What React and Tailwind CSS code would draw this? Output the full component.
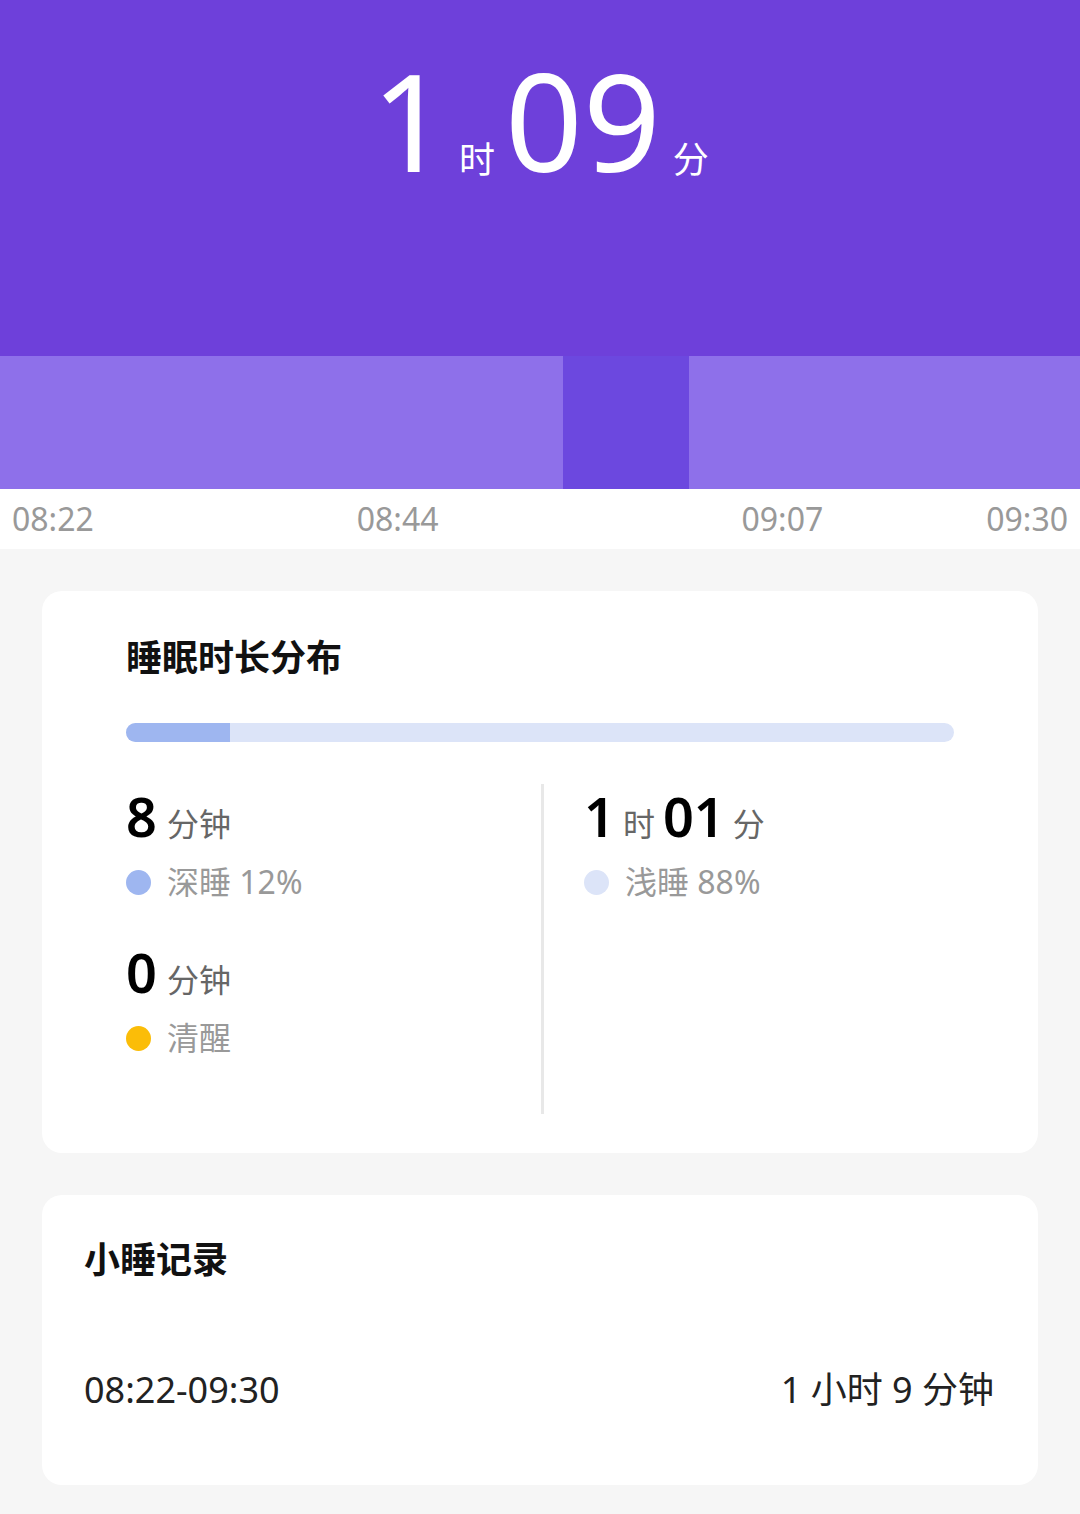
export default function App() {
  const font = { fontFamily: '"Noto Sans", "Noto Sans CJK SC", sans-serif' };
  return (
    <div className="w-[1080px] h-[1514px] bg-[#f6f6f6] overflow-hidden" style={font}>
      <div className="h-[356px] bg-[#6e40da] flex justify-center items-start pt-[60px]">
        <div className="flex items-end text-white leading-none">
          <span className="text-[136px] font-normal leading-[120px]">1</span>
          <span className="text-[36px] mx-[10px] mb-[2px]">时</span>
          <span className="text-[136px] font-normal leading-[120px]">09</span>
          <span className="text-[36px] ml-[12px] mb-[2px]">分</span>
        </div>
      </div>
      <div className="h-[133px] flex">
        <div className="w-[563px] bg-[#8e70ea]" />
        <div className="w-[126px] bg-[#6c48df]" />
        <div className="flex-1 bg-[#8e70ea]" />
      </div>
      <div className="h-[60px] bg-white flex justify-between items-center px-[12px] text-[32px] text-[#999]">
        <span>08:22</span>
        <span className="ml-[100px]">08:44</span>
        <span className="ml-[140px]">09:07</span>
        <span>09:30</span>
      </div>
      <div className="px-[42px] pt-[42px] flex flex-col gap-[42px]">
        <div className="bg-white rounded-[20px] h-[562px] px-[84px] pt-[40px]">
          <div className="text-[36px] font-bold text-[#111]">睡眠时长分布</div>
          <div className="mt-[38px] h-[19px] rounded-full bg-[#dce4f8] overflow-hidden">
            <div className="w-[104px] h-full bg-[#9eb6f0]" />
          </div>
          <div className="flex mt-[42px]">
            <div className="w-[415px] pt-[4px]">
              <div className="flex items-end gap-[10px]">
                <span className="text-[54px] font-semibold leading-[56px] text-black">8</span>
                <span className="text-[32px] text-[#666] leading-[40px]">分钟</span>
              </div>
              <div className="flex items-center gap-[16px] mt-[14px]">
                <span className="w-[25px] h-[25px] rounded-full bg-[#9eb6f0]" />
                <span className="text-[32px] text-[#999]">深睡 12%</span>
              </div>
              <div className="flex items-end gap-[10px] mt-[38px]">
                <span className="text-[54px] font-semibold leading-[56px] text-black">0</span>
                <span className="text-[32px] text-[#666] leading-[40px]">分钟</span>
              </div>
              <div className="flex items-center gap-[16px] mt-[14px]">
                <span className="w-[25px] h-[25px] rounded-full bg-[#fbbd08]" />
                <span className="text-[32px] text-[#999]">清醒</span>
              </div>
            </div>
            <div className="w-[3px] h-[330px] bg-[#e8e8e8]" />
            <div className="pl-[40px] pt-[4px]">
              <div className="flex items-end gap-[8px]">
                <span className="text-[54px] font-semibold leading-[56px] text-black">1</span>
                <span className="text-[32px] text-[#666] leading-[40px]">时</span>
                <span className="text-[54px] font-semibold leading-[56px] text-black">01</span>
                <span className="text-[32px] text-[#666] leading-[40px]">分</span>
              </div>
              <div className="flex items-center gap-[16px] mt-[14px]">
                <span className="w-[25px] h-[25px] rounded-full bg-[#dce4f8]" />
                <span className="text-[32px] text-[#999]">浅睡 88%</span>
              </div>
            </div>
          </div>
        </div>
        <div className="bg-white rounded-[20px] h-[290px] px-[42px] pt-[38px]">
          <div className="text-[36px] font-bold text-[#111]">小睡记录</div>
          <div className="flex justify-between mt-[76px] text-[36px] text-[#222] pr-[2px]">
            <span>08:22-09:30</span>
            <span>1 小时 9 分钟</span>
          </div>
        </div>
      </div>
    </div>
  );
}
